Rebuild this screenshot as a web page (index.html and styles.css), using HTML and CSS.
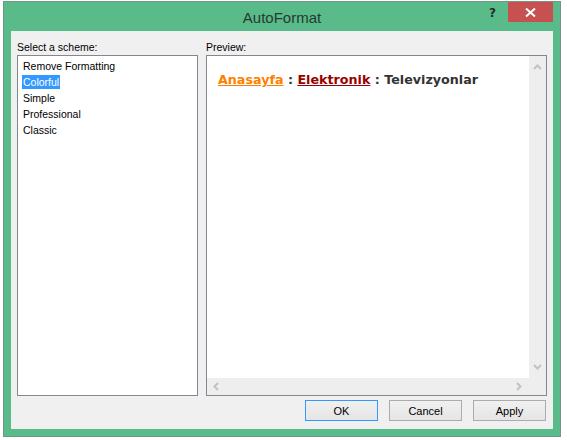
FILE: index.html
```html
<!DOCTYPE html>
<html lang="en">
<head>
  <meta charset="UTF-8">
  <title>AutoFormat</title>
  <link rel="stylesheet" href="styles.css">
</head>
<body>

<div id="dialog">
  <div id="title-bar">
    <span></span>
    <span id="title">AutoFormat</span>
    <div id="title-controls">
      <span id="help-btn">?</span>
      <span id="close-btn">
        <svg width="11" height="9" viewBox="0 0 11 9"><path d="M1 0.5 L10 8.5 M10 0.5 L1 8.5" stroke="#fff" stroke-width="2"/></svg>
      </span>
    </div>
  </div>

  <div id="client">
    <div id="panes">
      <!-- scheme list -->
      <div class="pane">
        <div class="caption">Select a scheme:</div>
        <ul id="scheme-list">
          <li><span>Remove Formatting</span></li>
          <li class="selected"><span>Colorful</span></li>
          <li><span>Simple</span></li>
          <li><span>Professional</span></li>
          <li><span>Classic</span></li>
        </ul>
      </div>

      <!-- preview -->
      <div class="pane">
        <div class="caption">Preview:</div>
        <div id="preview">
          <div id="preview-body">
            <a class="crumb-root">Anasayfa</a><span class="sep"> : </span><a class="crumb-mid">Elektronik</a><span class="sep"> : </span><span class="crumb-current">Televizyonlar</span>
          </div>
          <div class="vscroll">
            <svg width="9" height="6" viewBox="0 0 9 6"><path d="M1 5 L4.5 1.5 L8 5" stroke="#c2c2c2" stroke-width="2" fill="none"/></svg>
            <svg width="9" height="6" viewBox="0 0 9 6"><path d="M1 1 L4.5 4.5 L8 1" stroke="#c2c2c2" stroke-width="2" fill="none"/></svg>
          </div>
          <div class="hscroll">
            <svg width="6" height="9" viewBox="0 0 6 9"><path d="M5 1 L1.5 4.5 L5 8" stroke="#c2c2c2" stroke-width="2" fill="none"/></svg>
            <svg width="6" height="9" viewBox="0 0 6 9"><path d="M1 1 L4.5 4.5 L1 8" stroke="#c2c2c2" stroke-width="2" fill="none"/></svg>
          </div>
          <div class="corner"></div>
        </div>
      </div>
    </div>

    <div id="buttons">
      <button class="default">OK</button>
      <button>Cancel</button>
      <button>Apply</button>
    </div>
  </div>
</div>

</body>
</html>
```

FILE: styles.css
```css
body {
  margin: 0;
  background: #fff;
  font-family: "Liberation Sans", Arial, sans-serif;
}
#dialog {
  margin: 1px 0 0 3px;
  width: 558px;
  height: 436px;
  box-sizing: border-box;
  border: 1px solid #6f9784;
  background: #58bb89;
  padding: 0 7px 7px 7px;
  display: flex;
  flex-direction: column;
}
#title-bar {
  height: 29px;
  display: grid;
  grid-template-columns: 1fr auto 1fr;
  align-items: start;
}
#title {
  font-size: 15px;
  color: #263a30;
  line-height: 29px;
  padding-top: 1px;
}
#title-controls {
  justify-self: end;
  display: flex;
  align-items: start;
}
#help-btn {
  font-family: "DejaVu Sans", sans-serif;
  font-weight: bold;
  font-size: 12px;
  color: #2a2a2a;
  margin-top: 4px;
  margin-right: 12px;
}
#close-btn {
  width: 45px;
  height: 20px;
  background: #c75050;
  display: flex;
  align-items: center;
  justify-content: center;
}
#client {
  flex: 1;
  background: #f0f0f0;
  padding: 10px 7px 0 6px;
  font-size: 10.5px;
  color: #000;
}
#panes {
  display: grid;
  grid-template-columns: 181px 341px;
  gap: 8px;
}
.caption {
  height: 13px;
  line-height: 13px;
  margin-bottom: 1px;
}
#scheme-list {
  list-style: none;
  margin: 0;
  padding: 3px 0 0 4px;
  height: 341px;
  box-sizing: border-box;
  border: 1px solid #828790;
  background: #fff;
}
#scheme-list li {
  height: 14px;
  line-height: 14px;
  margin-bottom: 2px;
}
#scheme-list li span {
  display: inline-block;
  padding: 0 1px;
}
#scheme-list li.selected span {
  background: #3399ff;
  color: #fff;
}
#preview {
  height: 341px;
  box-sizing: border-box;
  border: 1px solid #828790;
  display: grid;
  grid-template-columns: 1fr 17px;
  grid-template-rows: 1fr 17px;
}
#preview-body {
  background: #fff;
  padding: 16px 0 0 11px;
  font-family: "DejaVu Sans", Verdana, sans-serif;
  font-weight: bold;
  font-size: 12.7px;
  line-height: 16px;
  color: #333;
  white-space: nowrap;
}
.crumb-root {
  color: #ff8000;
  text-decoration: underline;
}
.crumb-mid {
  color: #990000;
  text-decoration: underline;
}
.vscroll {
  background: #eeeeee;
  display: flex;
  flex-direction: column;
  justify-content: space-between;
  align-items: center;
  padding: 8px 0 8px 0;
}
.hscroll {
  background: #eeeeee;
  display: flex;
  justify-content: space-between;
  align-items: center;
  padding: 0 7px 0 6px;
}
.corner {
  background: #eeeeee;
}
#buttons {
  display: flex;
  justify-content: flex-end;
  gap: 11px;
  margin-top: 4px;
}
#buttons button {
  width: 73px;
  height: 21px;
  padding: 0;
  font-family: "Liberation Sans", Arial, sans-serif;
  font-size: 11px;
  color: #000;
  border: 1px solid #acacac;
  background: linear-gradient(#f0f0f0, #e5e5e5);
}
#buttons button.default {
  border-color: #3399ff;
}
```
